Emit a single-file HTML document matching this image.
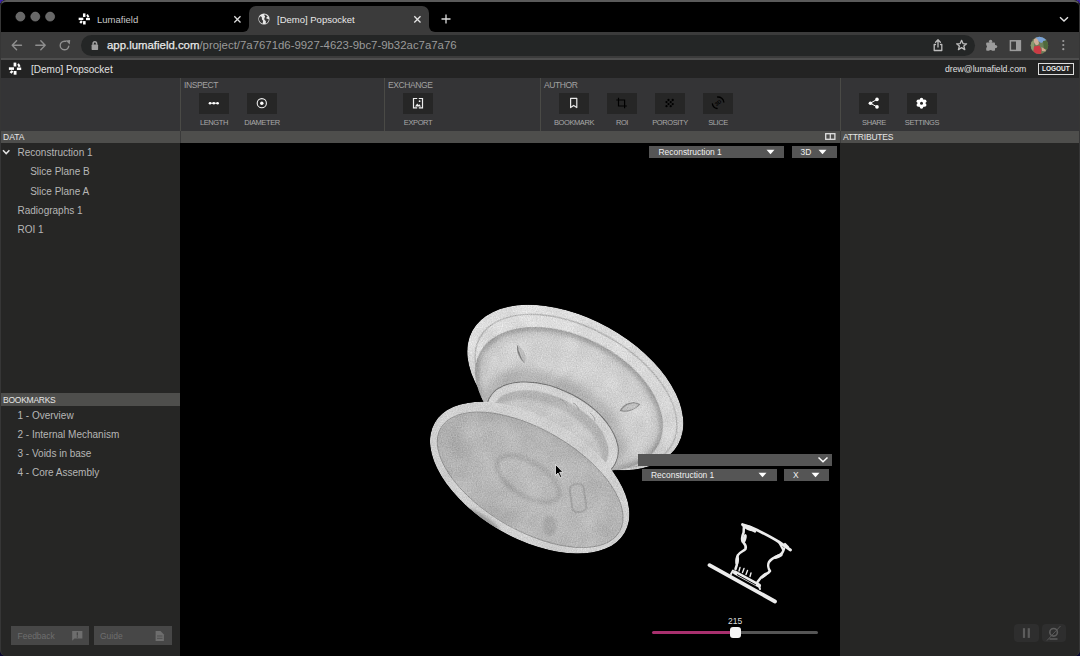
<!DOCTYPE html>
<html><head><meta charset="utf-8">
<style>
*{margin:0;padding:0;box-sizing:border-box}
html,body{width:1080px;height:656px;overflow:hidden;background:linear-gradient(#3a22a8,#0a0830);font-family:"Liberation Sans",sans-serif}
.a{position:absolute}
#win{position:absolute;left:0;top:0;width:1080px;height:656px;border-radius:6px;overflow:hidden;background:#262626}
#frame{position:absolute;left:0;top:0;width:1080px;height:656px;border-radius:6px;border:1px solid #363636;border-top:2px solid #5a5a5a;border-bottom:none;pointer-events:none}
#tabs{left:0;top:0;width:1080px;height:32px;background:#000}
#addr{left:0;top:32px;width:1080px;height:28px;background:#3b3b3b;border-bottom:2px solid #4e4e4e}
#pill{left:80.5px;top:35px;width:894.5px;height:21px;background:#242626;border-radius:11px}
#hdr{left:0;top:60px;width:1080px;height:18px;background:#232323}
#tool{left:0;top:78px;width:1080px;height:53px;background:#343436}
#strip{left:0;top:131px;width:1080px;height:12px;background:#4e4e4c}
#left{left:0;top:143px;width:180px;height:513px;background:#262625}
#vp{left:180px;top:143px;width:660px;height:513px;background:#000}
#right{left:840px;top:143px;width:240px;height:513px;background:#262625}
.vd{width:1px;background:#4a4a46}
.sec{font-size:8.5px;color:#a2a2a2;top:80.3px;letter-spacing:-0.4px}
.btn{width:30px;height:21px;background:#262626;top:93px}
.lbl{font-size:7.5px;color:#a8a8a8;top:118px;width:60px;text-align:center;letter-spacing:-0.4px}
.tree{font-size:10px;color:#b6b6b6}
.dd{background:#555;color:#eee;font-size:9px}
</style></head><body>
<div id="win">
  <div id="tabs" class="a"></div>
  <!-- active tab -->
  <div class="a" style="left:240px;top:20px;width:198px;height:12px;background:#3b3b3b"></div>
  <div class="a" style="left:0;top:0;width:249px;height:32px;background:#000;border-bottom-right-radius:6px"></div>
  <div class="a" style="left:429px;top:0;width:651px;height:32px;background:#000;border-bottom-left-radius:6px"></div>
  <div class="a" style="left:249px;top:6px;width:180px;height:26.5px;background:#3b3b3b;border-radius:7px 7px 0 0"></div>
  <!-- traffic lights -->
  <svg class="a" style="left:0;top:0" width="60" height="30"><g fill="#686868" stroke="#808080" stroke-width="0.6"><circle cx="20.4" cy="16.6" r="4.5"/><circle cx="35.3" cy="16.6" r="4.5"/><circle cx="50.1" cy="16.6" r="4.5"/></g></svg>
  <svg class="a" style="left:1057.5px;top:15px" width="12" height="9"><path d="M2 2.3L6 6.1L10 2.3" fill="none" stroke="#e0e0e0" stroke-width="1.4"/></svg>
  <!-- tab1 -->
  <svg class="a" style="left:76px;top:11px" width="16.5" height="16.5" viewBox="0 0 18 18"><g fill="#fff"><rect x="7.6" y="2.6" width="2.7" height="3.9"/><rect x="10.9" y="7.5" width="4.3" height="2.5"/><rect x="7.7" y="11" width="2.8" height="3.7"/><rect x="2.9" y="7.3" width="5.1" height="2.6"/><path d="M11.3 4.6L12.9 3.3L14.6 6.3L12.6 7.3Z"/><path d="M3.6 12.2L5.5 10.2L7.4 11.6L5.6 13.8Z"/></g></svg>
  <div class="a" style="left:97px;top:13.5px;font-size:9.5px;color:#c8c8c8">Lumafield</div>
  <svg class="a" style="left:232px;top:14px" width="11" height="11"><path d="M2.3 2.3L8.5 8.5M8.5 2.3L2.3 8.5" stroke="#dcdcdc" stroke-width="1.3"/></svg>

  <svg class="a" style="left:258px;top:13px" width="12" height="12" viewBox="0 0 12 12"><circle cx="6" cy="6" r="5.6" fill="#e8e8e8"/><path d="M2.2 3.2C3.5 3.4 4.2 4.3 3.9 5.4C3.6 6.3 4.6 6.8 5 7.6C5.3 8.4 4.8 9.5 4.6 10.8C3 10.2 1.3 8.6 0.9 6.6C0.8 5.3 1.3 4.1 2.2 3.2Z M7.3 1.6C7.9 2.5 8.8 2.6 9.6 3.2C9.4 4 8.3 4.3 8.1 5.1C8.6 6.1 10 5.9 10.9 6.6C10.6 8.5 9.4 9.9 7.8 10.7C7.6 9.6 8.3 8.5 7.5 7.8C6.6 7.3 6.1 6.4 6.3 5.5C6.5 4.4 7.7 3.5 6.6 2.8C6.2 2.5 6.1 1.9 6.6 1.5Z" fill="#3b3b3b"/></svg>
  <div class="a" style="left:277px;top:13.5px;font-size:9.5px;color:#e8e8e8">[Demo] Popsocket</div>
  <svg class="a" style="left:411.5px;top:13.5px" width="11" height="11"><path d="M2.3 2.3L8.5 8.5M8.5 2.3L2.3 8.5" stroke="#e6e6e6" stroke-width="1.3"/></svg>
  <svg class="a" style="left:439.5px;top:13px" width="12" height="12"><path d="M6 1.5V10.5M1.5 6H10.5" stroke="#dcdcdc" stroke-width="1.3"/></svg>

  <div id="addr" class="a"></div>
  <div id="pill" class="a"></div>
  <div class="a" style="left:107px;top:38.5px;font-size:11.4px;color:#e8e8e8"><span style="-webkit-text-stroke:0.25px #e8e8e8">app.lumafield.com</span><span style="color:#9a9a9a">/project/7a7671d6-9927-4623-9bc7-9b32ac7a7a76</span></div>


  <!-- address bar icons -->
  <svg class="a" style="left:0;top:32px" width="120" height="28" viewBox="0 32 120 28">
    <g fill="none" stroke="#8e8e8e" stroke-width="1.4" stroke-linecap="round" stroke-linejoin="round">
      <path d="M21.5 45.2H12.2M16.6 40.7L12.2 45.2L16.6 49.7"/>
      <path d="M35.8 45.2H45.2M40.8 40.7L45.2 45.2L40.8 49.7"/>
      <path d="M68.76 46.10A4.3 4.3 0 1 1 64.35 41.20L65.8 41.2"/>
    </g>
    <path d="M65.6 40.5L70.2 39.9L69.8 44.5Z" fill="#8e8e8e"/>
    <rect x="91.6" y="44.6" width="6.5" height="5.3" rx="0.6" fill="#a0a0a0"/>
    <path d="M93.1 44.8V43.6A1.75 1.75 0 0 1 96.6 43.6V44.8" fill="none" stroke="#a0a0a0" stroke-width="1.5"/>
  </svg>
  <svg class="a" style="left:920px;top:32px" width="160" height="28" viewBox="920 32 160 28">
    <g fill="none" stroke="#bdbdbd" stroke-width="1.3" stroke-linecap="round" stroke-linejoin="round">
      <path d="M935.5 44.5H934.2V50.5H941.8V44.5H940.5"/>
      <path d="M938 47V39.8M935.6 42.2L938 39.8L940.4 42.2"/>
      <path d="M961.6 40.3L963 43.6L966.6 43.8L963.8 46L964.8 49.6L961.6 47.6L958.4 49.6L959.4 46L956.6 43.8L960.2 43.6Z"/>
    </g>
    <g fill="#9c9c9c"><rect x="986.2" y="42.6" width="8.8" height="8.2" rx="0.8"/><circle cx="990.6" cy="41.4" r="1.7"/><circle cx="995.5" cy="46.6" r="1.7"/></g><g fill="#3b3b3b"><circle cx="990.6" cy="51.3" r="1.4"/><circle cx="985.6" cy="46.6" r="1.4"/></g>
    <rect x="1010.4" y="40.8" width="10" height="9.6" fill="none" stroke="#9c9c9c" stroke-width="1.5"/>
    <rect x="1016" y="40.8" width="4.4" height="9.6" fill="#9c9c9c"/>
    <clipPath id="avc"><circle cx="1039.4" cy="45.35" r="8.7"/></clipPath>
    <g clip-path="url(#avc)">
      <rect x="1030" y="36" width="19" height="19" fill="#6b7f5a"/>
      <path d="M1034 36H1046L1045.5 41L1041 43L1037 40Z" fill="#7aa2d6"/>
      <path d="M1043 41L1049 40V50L1044 49Z" fill="#4f6a3c"/>
      <path d="M1030 42L1034 41L1034 50L1030 52Z" fill="#8a9a70"/>
      <ellipse cx="1036.3" cy="41.8" rx="2.3" ry="3.5" transform="rotate(-20 1036.3 41.8)" fill="#cfae98"/>
      <path d="M1034 46.5L1039.5 45.5L1041.5 50L1041 55H1034.5L1033.5 50Z" fill="#cc3a44"/>
      <path d="M1041.5 47L1045.5 49.5L1046 51.5L1042 51Z" fill="#d4a890"/>
    </g>
    <g fill="#9c9c9c"><circle cx="1063.3" cy="41" r="1.1"/><circle cx="1063.3" cy="45" r="1.1"/><circle cx="1063.3" cy="49.2" r="1.1"/></g>
  </svg>

  <div id="hdr" class="a"></div>
  <svg class="a" style="left:6px;top:60px" width="18" height="18" viewBox="0 0 18 18"><g fill="#fff"><rect x="7.6" y="2.6" width="2.7" height="3.9"/><rect x="10.9" y="7.5" width="4.3" height="2.5"/><rect x="7.7" y="11" width="2.8" height="3.7"/><rect x="2.9" y="7.3" width="5.1" height="2.6"/><path d="M11.3 4.6L12.9 3.3L14.6 6.3L12.6 7.3Z"/><path d="M3.6 12.2L5.5 10.2L7.4 11.6L5.6 13.8Z"/></g></svg>
  <div class="a" style="left:31px;top:63.8px;font-size:10px;color:#e0e0e0">[Demo] Popsocket</div>
  <div class="a" style="left:945px;top:64.2px;font-size:8.7px;color:#e0e0e0">drew@lumafield.com</div>
  <div class="a" style="left:1037.7px;top:62.5px;width:36.3px;height:12px;border:1px solid #ddd;font-size:6.5px;font-weight:bold;color:#eee;text-align:center;line-height:10px">LOGOUT</div>

  <div id="tool" class="a"></div>
  <div class="a vd" style="left:180px;top:78px;height:65px"></div>
  <div class="a vd" style="left:384px;top:78px;height:53px"></div>
  <div class="a vd" style="left:540px;top:78px;height:53px"></div>
  <div class="a vd" style="left:840px;top:78px;height:65px"></div>
  <div class="a sec" style="left:184px">INSPECT</div>
  <div class="a sec" style="left:388px">EXCHANGE</div>
  <div class="a sec" style="left:544px">AUTHOR</div>

  <div class="a btn" style="left:199px"></div><div class="a lbl" style="left:184px">LENGTH</div>
  <div class="a btn" style="left:247px"></div><div class="a lbl" style="left:232px">DIAMETER</div>
  <div class="a btn" style="left:403px"></div><div class="a lbl" style="left:388px">EXPORT</div>
  <div class="a btn" style="left:559px"></div><div class="a lbl" style="left:544px">BOOKMARK</div>
  <div class="a btn" style="left:607px"></div><div class="a lbl" style="left:592px">ROI</div>
  <div class="a btn" style="left:655px"></div><div class="a lbl" style="left:640px">POROSITY</div>
  <div class="a btn" style="left:703px"></div><div class="a lbl" style="left:688px">SLICE</div>
  <div class="a btn" style="left:859px"></div><div class="a lbl" style="left:844px">SHARE</div>
  <div class="a btn" style="left:907px"></div><div class="a lbl" style="left:892px">SETTINGS</div>


  <svg class="a" style="left:180px;top:78px" width="760" height="53" viewBox="180 78 760 53">
    <!-- length -->
    <path d="M210 103.2H217.7" stroke="#fff" stroke-width="1"/>
    <g fill="#fff"><circle cx="210" cy="103.2" r="1.3"/><circle cx="213.8" cy="103.2" r="1.3"/><circle cx="217.6" cy="103.2" r="1.3"/></g>
    <!-- diameter -->
    <circle cx="261.8" cy="103.2" r="4.6" fill="none" stroke="#f0f0f0" stroke-width="1.1"/>
    <circle cx="261.8" cy="103.2" r="1.7" fill="#fff"/>
    <!-- export -->
    <g fill="none" stroke="#eee" stroke-width="1.2">
      <path d="M417.2 98.5H413.5V107.9H417.2M418.8 98.5H422.5V107.9H418.8"/>
    </g>
    <path d="M415 106.4L417.2 103.6L418.5 105L419.4 104.2L421.1 106.4Z" fill="#eee"/>
    <circle cx="419.6" cy="101.2" r="0.9" fill="#eee"/>
    <!-- bookmark -->
    <path d="M570.6 98.4H576.8V107.6L573.7 105.4L570.6 107.6Z" fill="none" stroke="#e8e8e8" stroke-width="1.2" stroke-linejoin="round"/>
    <!-- roi crop -->
    <g fill="none" stroke="#000" stroke-width="1.2">
      <path d="M618.5 97.8V106H626.8"/>
      <path d="M616.3 100H624.6V108.2"/>
    </g>
    <!-- porosity -->
    <g fill="#000">
      <circle cx="668.5" cy="100" r="1.15"/><circle cx="672.7" cy="100" r="1.15"/>
      <circle cx="666.5" cy="102.1" r="1.15"/><circle cx="670.7" cy="102.1" r="1.15"/>
      <circle cx="668.5" cy="104.1" r="1.15"/><circle cx="672.7" cy="104.1" r="1.15"/>
      <circle cx="666.5" cy="106.2" r="1.15"/><circle cx="670.7" cy="106.2" r="1.15"/>
    </g>
    <!-- slice 3d rotation -->
    <g fill="none" stroke="#000" stroke-width="1.3" stroke-linecap="round">
      <path d="M717.59 97.02A5.8 5.8 0 0 1 723.84 101.99"/>
      <path d="M712.39 103.81A5.8 5.8 0 0 0 717.09 108.51"/>
    </g>
    <text x="718.1" y="104.6" font-family="Liberation Sans" font-weight="bold" font-size="5.2" text-anchor="middle" fill="#000" transform="rotate(-40 718.1 102.8)">3D</text>
    <!-- share -->
    <path d="M877 99.4L870.4 103.2L877 106.9" fill="none" stroke="#fff" stroke-width="1"/>
    <g fill="#fff"><circle cx="877" cy="99.4" r="1.8"/><circle cx="870.4" cy="103.2" r="1.8"/><circle cx="877" cy="106.9" r="1.8"/></g>
    <!-- settings -->
    <g fill="#fff"><circle cx="921.5" cy="103.2" r="3.9"/><circle cx="921.50" cy="106.90" r="1.75"/><circle cx="918.30" cy="105.05" r="1.75"/><circle cx="918.30" cy="101.35" r="1.75"/><circle cx="921.50" cy="99.50" r="1.75"/><circle cx="924.70" cy="101.35" r="1.75"/><circle cx="924.70" cy="105.05" r="1.75"/></g>
    <circle cx="921.5" cy="103.2" r="1.5" fill="#262626"/>
  </svg>

  <div id="strip" class="a"></div>
  <div class="a" style="left:3px;top:132px;font-size:8.5px;color:#e6e6e6">DATA</div>
  <div class="a" style="left:843px;top:132px;font-size:8.5px;color:#e6e6e6;letter-spacing:-0.2px">ATTRIBUTES</div>
  <svg class="a" style="left:825px;top:133px" width="11" height="7"><rect x="0.7" y="0.7" width="9.2" height="5.6" fill="none" stroke="#e0e0e0" stroke-width="1.3"/><path d="M5.3 0.5V6.5" stroke="#e0e0e0" stroke-width="1.2"/></svg>
  <div class="a" style="left:840px;top:131px;width:1px;height:12px;background:#3e3e3e"></div>
  <div class="a" style="left:180px;top:131px;width:1px;height:12px;background:#3a3a3a"></div>

  <div id="left" class="a"></div>
  <div id="vp" class="a"></div>
  <div id="right" class="a"></div>

  <svg class="a" style="left:2px;top:149px" width="9" height="7"><path d="M1 1.2L4.2 4.6L7.4 1.2" fill="none" stroke="#e0e0e0" stroke-width="1.5"/></svg>
  <div class="a tree" style="left:17.5px;top:147px">Reconstruction 1</div>
  <div class="a tree" style="left:30.2px;top:166.4px">Slice Plane B</div>
  <div class="a tree" style="left:30.2px;top:185.7px">Slice Plane A</div>
  <div class="a tree" style="left:17.5px;top:204.6px">Radiographs 1</div>
  <div class="a tree" style="left:17.5px;top:223.6px">ROI 1</div>

  <div class="a" style="left:0;top:393.4px;width:180px;height:12.2px;background:#4e4e4c"></div>
  <div class="a" style="left:3px;top:394.5px;font-size:8.5px;color:#e6e6e6;letter-spacing:-0.25px">BOOKMARKS</div>
  <div class="a tree" style="left:17.5px;top:409.9px">1 - Overview</div>
  <div class="a tree" style="left:17.5px;top:429px">2 - Internal Mechanism</div>
  <div class="a tree" style="left:17.5px;top:447.8px">3 - Voids in base</div>
  <div class="a tree" style="left:17.5px;top:467.3px">4 - Core Assembly</div>

  <div class="a" style="left:11px;top:626.3px;width:78.3px;height:19.2px;background:#474747"></div>
  <div class="a" style="left:17.5px;top:630.5px;font-size:8.5px;color:#6e6e6e">Feedback</div>
  <svg class="a" style="left:71px;top:630px" width="13" height="12" viewBox="71 630 13 12"><path d="M72.2 631H82.4V638.6H74.5L72.2 640.8Z" fill="#6e6e6e"/><rect x="76.7" y="632.3" width="1.3" height="3.3" fill="#474747"/><rect x="76.7" y="636.4" width="1.3" height="1.2" fill="#474747"/></svg>
  <div class="a" style="left:94px;top:626.3px;width:78px;height:19.2px;background:#474747"></div>
  <div class="a" style="left:100px;top:630.5px;font-size:8.5px;color:#6e6e6e">Guide</div>
  <svg class="a" style="left:154px;top:630px" width="12" height="12" viewBox="154 630 12 12"><path d="M155.6 631H160.5L163.9 634.4V641H155.6Z" fill="#6e6e6e"/><path d="M157 636H162.5M157 638.3H162.5" stroke="#474747" stroke-width="0.8"/></svg>


  <svg class="a" style="left:180px;top:143px" width="660" height="513" viewBox="180 143 660 513">
    <defs>
      <filter id="grain" x="0" y="0" width="100%" height="100%" color-interpolation-filters="sRGB">
        <feTurbulence type="fractalNoise" baseFrequency="0.8" numOctaves="2" seed="5" result="n1"/>
        <feColorMatrix in="n1" type="matrix" values="0.33 0.33 0.33 0 0  0.33 0.33 0.33 0 0  0.33 0.33 0.33 0 0  0 0 0 0 1" result="g1"/>
        <feTurbulence type="fractalNoise" baseFrequency="0.05" numOctaves="2" seed="9" result="n2"/>
        <feColorMatrix in="n2" type="matrix" values="0.33 0.33 0.33 0 0  0.33 0.33 0.33 0 0  0.33 0.33 0.33 0 0  0 0 0 0 1" result="g2"/>
        <feComposite in="SourceGraphic" in2="g1" operator="arithmetic" k1="0" k2="1" k3="0.32" k4="-0.16" result="c1"/>
        <feComposite in="c1" in2="g2" operator="arithmetic" k1="0" k2="1" k3="0.14" k4="-0.07" result="c2"/>
        <feComposite in="c2" in2="SourceAlpha" operator="in"/>
      </filter>
      <linearGradient id="gBack" x1="0" y1="0" x2="1" y2="1">
        <stop offset="0" stop-color="#e2e2e2"/><stop offset="1" stop-color="#cdcdcd"/>
      </linearGradient>
      <radialGradient id="gFace" cx="0.55" cy="0.55" r="0.6">
        <stop offset="0" stop-color="#bcbcbc"/><stop offset="0.8" stop-color="#b6b6b6"/><stop offset="1" stop-color="#a9a9a9"/>
      </radialGradient>
      <radialGradient id="gConc" cx="0.5" cy="0.5" r="0.5">
        <stop offset="0" stop-color="#d2d2d2"/><stop offset="0.85" stop-color="#d0d0d0"/><stop offset="1" stop-color="#bdbdbd"/>
      </radialGradient>
      <filter id="soft0" x="-20%" y="-20%" width="140%" height="140%"><feGaussianBlur stdDeviation="0.6"/></filter>
      <filter id="soft" x="-20%" y="-20%" width="140%" height="140%"><feGaussianBlur stdDeviation="1.5"/></filter>
      <filter id="soft2" x="-20%" y="-20%" width="140%" height="140%"><feGaussianBlur stdDeviation="4"/></filter>
      <clipPath id="clipConc"><ellipse cx="569" cy="399" rx="100" ry="62" transform="rotate(27 569 399)"/></clipPath>
      <clipPath id="clipFace"><ellipse cx="530.2" cy="479.8" rx="103" ry="50.2" transform="rotate(30.1 530.2 479.8)"/></clipPath>
      <clipPath id="clipFront"><ellipse cx="529.7" cy="477.7" rx="109.8" ry="60.4" transform="rotate(30.1 529.7 477.7)"/></clipPath>
    </defs>
    <g filter="url(#grain)">
    <!-- back disc -->
    <ellipse cx="575.3" cy="387.5" rx="117.6" ry="68.5" transform="rotate(29 575.3 387.5)" fill="url(#gBack)"/>
    <ellipse cx="576" cy="391" rx="110" ry="63" transform="rotate(29 576 391)" fill="none" stroke="#a0a0a0" stroke-width="1" filter="url(#soft0)"/>
    <ellipse cx="569" cy="399" rx="100" ry="62" transform="rotate(27 569 399)" fill="url(#gConc)"/>
    <g clip-path="url(#clipConc)"><ellipse cx="569" cy="399" rx="99" ry="61" transform="rotate(27 569 399)" fill="none" stroke="#a6a6a6" stroke-width="5" filter="url(#soft)"/></g>
    <ellipse cx="569" cy="399" rx="100" ry="62" transform="rotate(27 569 399)" fill="none" stroke="#9a9a9a" stroke-width="1" filter="url(#soft0)"/>
    <!-- neck shadow -->
    <g clip-path="url(#clipConc)"><ellipse cx="553" cy="424" rx="78" ry="47" transform="rotate(27 553 424)" fill="#b4b4b4" filter="url(#soft2)"/></g>
    <!-- notches -->
    <path d="M517.5 344.5C515.5 350 518 357 524.5 363.5C527.5 358 525 350 517.5 344.5Z" fill="#b8b8b8" filter="url(#soft0)"/>
    <path d="M517.5 344.5C516 350 518.5 357 524.5 363.5C520.5 357 518.5 351 517.5 344.5Z" fill="#7a7a7a" filter="url(#soft0)"/>
    <path d="M620.5 410.5C625 403 634 401 639.5 404.5C635 410 627 412.5 620.5 410.5Z" fill="#bdbdbd" stroke="#8a8a8a" stroke-width="1.1" filter="url(#soft0)"/>
    <!-- ring -->
    <ellipse cx="552.2" cy="431" rx="71" ry="41.5" transform="rotate(27 552.2 431)" fill="#d3d3d3" stroke="#707070" stroke-width="0.9"/>
    <ellipse cx="550" cy="433.5" rx="63" ry="36.5" transform="rotate(27 550 433.5)" fill="#b2b2b2" filter="url(#soft0)"/>
    <ellipse cx="546" cy="440" rx="60" ry="34" transform="rotate(27 546 440)" fill="#c8c8c8" filter="url(#soft)"/>
    <path d="M560 399C563 400 566 403 567 406M573 403C576 404 578 407 579 410M590 413C593 415 595 418 595 421" fill="none" stroke="#9a9a9a" stroke-width="1" filter="url(#soft0)"/>
    <!-- front disc -->
    <ellipse cx="529.7" cy="477.7" rx="109.8" ry="60.4" transform="rotate(30.1 529.7 477.7)" fill="#d0d0d0"/>
    <ellipse cx="530.2" cy="479.8" rx="103.3" ry="50.5" transform="rotate(30.1 530.2 479.8)" fill="url(#gFace)" stroke="#8e8e8e" stroke-width="0.8"/>
    <g clip-path="url(#clipFront)"><ellipse cx="484" cy="521" rx="20" ry="4.5" transform="rotate(36 484 521)" fill="#8e8e8e" opacity="0.8" filter="url(#soft)"/></g>
    <g clip-path="url(#clipFace)">
    <ellipse cx="528" cy="479" rx="35" ry="17" transform="rotate(32 528 479)" fill="none" stroke="#a8a8a8" stroke-width="4.5" filter="url(#soft)"/>
    <ellipse cx="500" cy="515" rx="22" ry="9" transform="rotate(35 500 515)" fill="#acacac" filter="url(#soft2)"/>
    <rect x="571" y="484" width="14" height="28" rx="5" transform="rotate(-8 578 498)" fill="none" stroke="#a0a0a0" stroke-width="1.7" filter="url(#soft0)"/>
    <ellipse cx="549.5" cy="525.6" rx="7" ry="10" fill="#a6a6a6" filter="url(#soft)"/>
    <ellipse cx="455" cy="440" rx="10" ry="25" transform="rotate(-35 455 440)" fill="#ababab" filter="url(#soft2)"/>
    </g>
    </g>
    <!-- cursor -->
    <path d="M555.5 464.5V475.5L558 473L560.2 477.5L561.8 476.8L559.6 472.3H563Z" fill="#000" stroke="#fff" stroke-width="0.7"/>
    <!-- slice image -->
    <g fill="none" stroke="#ececec" stroke-linecap="round" stroke-linejoin="round">
      <path d="M709.5 565.2L775 601.5" stroke-width="3.8"/>
      <path d="M742.5 524.5C748 526 752 527.5 757 530C764 533.5 772 537.5 779 542L790.5 550" stroke-width="2.8"/>
      <path d="M743 525.5L755 531.5L750 527" stroke-width="2.4"/>
      <path d="M779 542L783 549.5M785 544L788 547" stroke-width="2.2"/>
      <path d="M744 526.5C743.6 529 743.8 531 743.6 532.5C742.2 536 741.5 539 742.5 541.5C744 543.5 747 545 745.5 549C744 551 739.5 552 738 555C736 558 737 562 736.8 565L735.5 569" stroke-width="2.5"/>
      <path d="M784 548.5C783.5 551 783 553.5 779 555.5C775 557 771 559 769 562C767.5 565 768.5 569 770 571C768.5 573.5 764 575 761 577.5L757.5 582" stroke-width="2.5"/>
      <path d="M735 572.5L759 585.5" stroke-width="4.2"/>
      <path d="M731 574L733 570.5M759 586L760 589" stroke-width="2"/>
      <path d="M739 571L740 567.5M742.5 572.5L744 568.5M746 574.5L747.5 570.5M750 576.5L751 573" stroke-width="1.4"/>
    </g>
    <g fill="#ececec">
      <ellipse cx="744.6" cy="538.5" rx="1.8" ry="4.5" transform="rotate(15 744.6 538.5)"/>
      <ellipse cx="737.2" cy="560.5" rx="1.8" ry="4.5" transform="rotate(5 737.2 560.5)"/>
      <ellipse cx="778.5" cy="556.2" rx="4.6" ry="1.8" transform="rotate(-25 778.5 556.2)"/>
      <ellipse cx="764" cy="575.5" rx="4" ry="1.7" transform="rotate(-40 764 575.5)"/>
      <ellipse cx="749" cy="528" rx="6" ry="2.4" transform="rotate(22 749 528)"/>
    </g>
    <path d="M737 574.5L756 585" stroke="#000" stroke-width="0.9"/>
  </svg>

  <div class="a dd" style="left:649px;top:146px;width:135px;height:11.5px"></div>
  <div class="a" style="left:658.5px;top:146.8px;font-size:8.45px;color:#f0f0f0">Reconstruction 1</div>
  <svg class="a" style="left:766px;top:149px" width="9" height="6"><path d="M0.5 0.8H8.5L4.5 5.2Z" fill="#fff"/></svg>
  <div class="a dd" style="left:792px;top:146px;width:45px;height:11.5px"></div>
  <div class="a" style="left:800.5px;top:146.8px;font-size:8.45px;color:#f0f0f0">3D</div>
  <svg class="a" style="left:818px;top:149px" width="9" height="6"><path d="M0.5 0.8H8.5L4.5 5.2Z" fill="#fff"/></svg>

  <div class="a dd" style="left:638px;top:454px;width:194px;height:11.5px"></div>
  <svg class="a" style="left:817px;top:455px" width="12" height="9"><path d="M1.5 2.5L6 6.8L10.5 2.5" fill="none" stroke="#fff" stroke-width="1.5"/></svg>
  <div class="a dd" style="left:642px;top:469px;width:135px;height:11.5px"></div>
  <div class="a" style="left:651px;top:469.8px;font-size:8.45px;color:#f0f0f0">Reconstruction 1</div>
  <svg class="a" style="left:758px;top:472px" width="9" height="6"><path d="M0.5 0.8H8.5L4.5 5.2Z" fill="#fff"/></svg>
  <div class="a dd" style="left:784px;top:469px;width:45px;height:11.5px"></div>
  <div class="a" style="left:793px;top:469.8px;font-size:8.45px;color:#f0f0f0">X</div>
  <svg class="a" style="left:810.5px;top:472px" width="9" height="6"><path d="M0.5 0.8H8.5L4.5 5.2Z" fill="#fff"/></svg>

  <!-- slider -->
  <div class="a" style="left:652px;top:630.5px;width:83px;height:3px;background:#a8306e;border-radius:1.5px"></div>
  <div class="a" style="left:735px;top:630.5px;width:82.5px;height:3px;background:#555;border-radius:1.5px"></div>
  <div class="a" style="left:729.5px;top:626.5px;width:11.5px;height:11px;background:#f4f4f4;border-radius:3px"></div>
  <div class="a" style="left:728px;top:615.5px;font-size:8.5px;color:#ddd">215</div>

  <!-- bottom buttons -->
  <div class="a" style="left:1014px;top:623.5px;width:25px;height:18.5px;background:#2e2e2e;border-radius:4px"></div>
  <div class="a" style="left:1042px;top:623.5px;width:24px;height:18.5px;background:#2e2e2e;border-radius:4px"></div>
  <svg class="a" style="left:1014px;top:623px" width="54" height="20" viewBox="1014 623 54 20">
    <rect x="1022.9" y="628.2" width="2.2" height="9.7" fill="#5c5c5c"/>
    <rect x="1027.7" y="628.2" width="2.2" height="9.7" fill="#5c5c5c"/>
    <circle cx="1053.6" cy="632.3" r="3.8" fill="none" stroke="#5c5c5c" stroke-width="1.6"/>
    <path d="M1049.5 639H1057.5" stroke="#5c5c5c" stroke-width="1.4"/>
    <path d="M1047 640.5L1060.5 626" stroke="#5c5c5c" stroke-width="0.9"/>
  </svg>
</div>
<div id="frame"></div>
</body></html>
